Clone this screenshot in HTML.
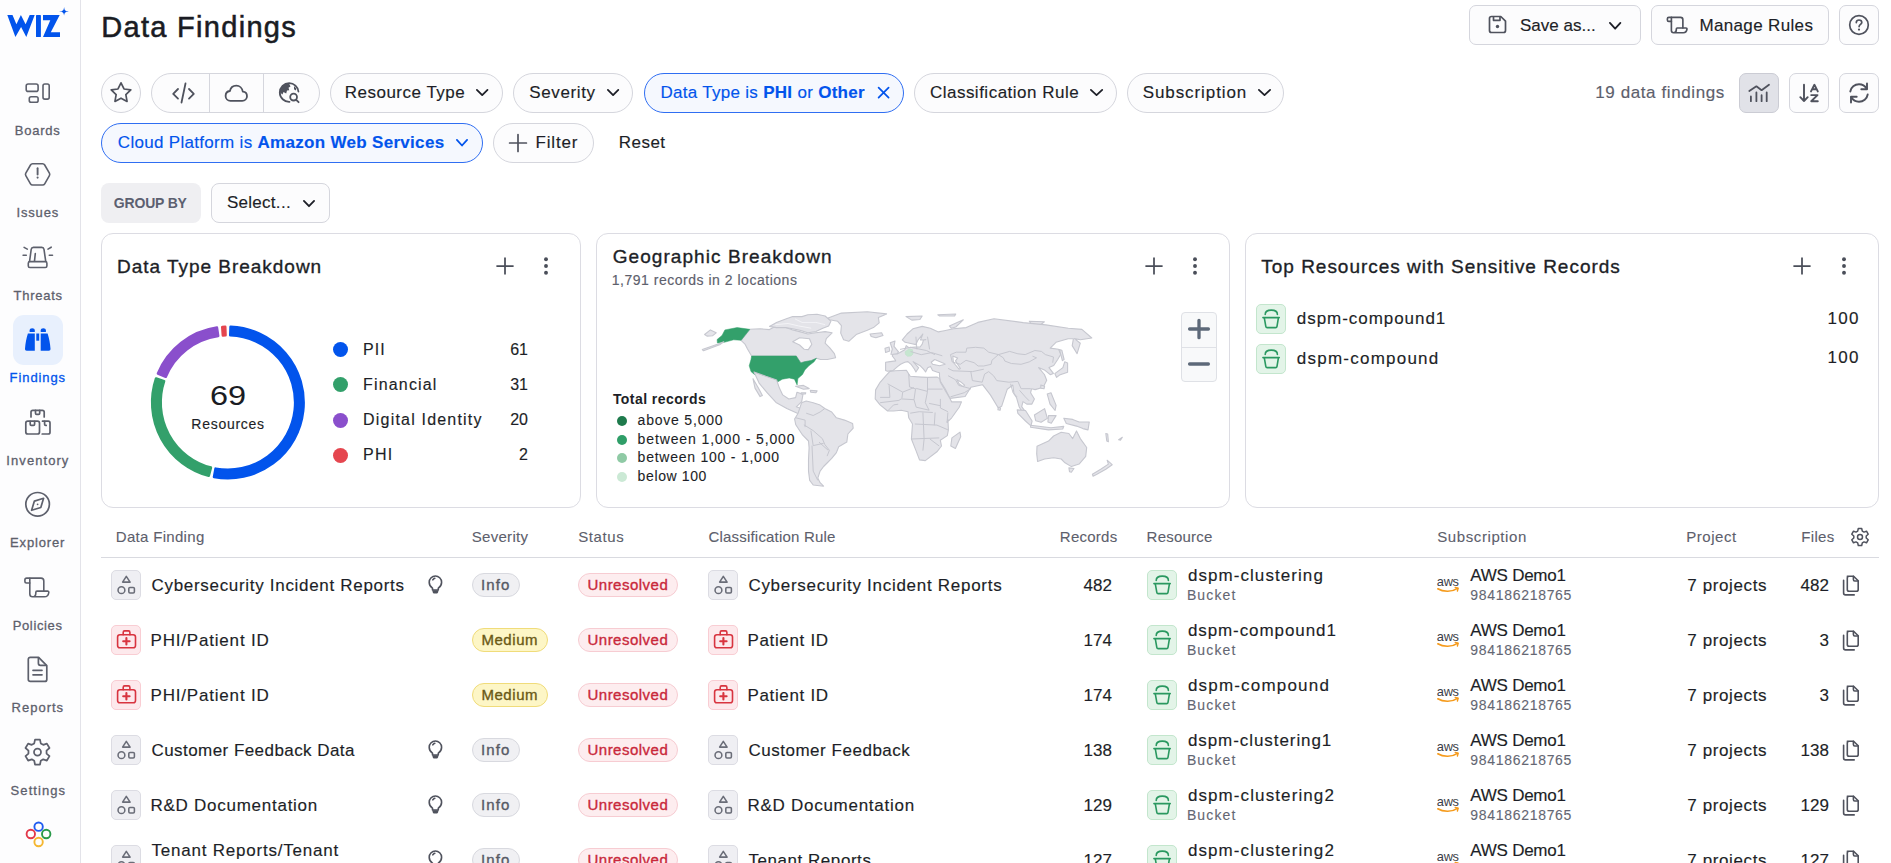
<!DOCTYPE html>
<html><head><meta charset="utf-8"><title>Data Findings</title>
<style>
*{box-sizing:border-box;margin:0;padding:0}
html,body{width:1891px;height:863px;overflow:hidden;background:#fff;font-family:"Liberation Sans",sans-serif;color:#1d1f27}
.a{position:absolute}
.t{position:absolute;white-space:nowrap;line-height:1}
#side{position:absolute;left:0;top:0;width:81px;height:863px;background:#fdfdfe;border-right:1px solid #e3e3e9}
.nl{position:absolute;left:0;width:76px;text-align:center;font-size:13px;color:#5d606c;letter-spacing:0.5px;line-height:1;-webkit-text-stroke:0.3px #5d606c}
.pill{position:absolute;height:40px;border:1px solid #d5d6dd;border-radius:20px;background:#fcfcfd}
.bpill{position:absolute;height:40px;border:1px solid #2f6ef2;border-radius:20px;background:#f5f8fe}
.btn{position:absolute;height:40px;border:1px solid #d5d6dd;border-radius:7px;background:#fcfcfd}
.card{position:absolute;top:233px;height:275px;border:1px solid #dcdce3;border-radius:12px;background:#fff}
.ic{position:absolute;width:30px;height:30px;border-radius:5px;border:1px solid #dcdce3;background:#efeff3}
.icr{background:#fde9ec;border-color:#f9cdd3}
.icg{background:#e3f4e8;border-color:#c3e6cd}
.tag{position:absolute;height:24px;border-radius:12px}
.ti{border:1px solid #d8d9df;background:#f0f0f3}
.tm{border:1px solid #f0dc7a;background:#fdf6c6}
.tu{border:1px solid #f7ccd2;background:#fdedef}

</style></head><body>
<div id="side">
<svg class="a" style="left:0;top:0" width="80" height="45" viewBox="0 0 80 45">
<g fill="#0254ec">
<path d="M7.3 15.1H12.5L16.4 24.3L20.9 15.1L25.6 24.3L29.7 15.1H34.7L26.3 37L21.1 26.9L15.4 37Z"/>
<rect x="36" y="15.1" width="4.9" height="21.9" rx="0.6"/>
<path d="M43 15.1H59.7L50.8 32.3H60V37H43L50.3 20.3H43Z"/>
<path d="M64.1 7C64.6 10.6 65.2 11.1 68.8 11.5C65.2 11.9 64.6 12.4 64.1 15.6C63.6 12.4 63 11.9 59.2 11.5C63 11.1 63.6 10.6 64.1 7Z"/>
</g></svg>
<!-- boards -->
<svg class="a" style="left:24px;top:80px" width="28" height="26" viewBox="0 0 28 26" fill="none" stroke="#5d606c" stroke-width="1.6">
<rect x="2.2" y="4" width="11.9" height="7.4" rx="2"/>
<rect x="5.3" y="16.7" width="8.8" height="5.5" rx="1.8"/>
<rect x="19" y="4" width="6.2" height="15.1" rx="1.8"/>
</svg>
<!-- issues -->
<svg class="a" style="left:24px;top:161px" width="28" height="27" viewBox="0 0 28 27" fill="none" stroke="#5d606c" stroke-width="1.6" stroke-linejoin="round">
<path d="M8.60 2.80L18.60 2.80Q20.00 2.80 20.70 4.01L25.40 12.19Q26.10 13.40 25.40 14.61L20.70 22.79Q20.00 24.00 18.60 24.00L8.60 24.00Q7.20 24.00 6.50 22.79L1.80 14.61Q1.10 13.40 1.80 12.19L6.50 4.01Q7.20 2.80 8.60 2.80Z"/>
<path d="M13.6 7.3V13.5" stroke-linecap="round" stroke-width="1.9"/>
<circle cx="13.6" cy="16.6" r="1.05" fill="#5d606c" stroke="none"/>
</svg>
<!-- threats -->
<svg class="a" style="left:22px;top:244px" width="32" height="26" viewBox="0 0 32 26" fill="none" stroke="#5d606c" stroke-width="1.6" stroke-linecap="round" stroke-linejoin="round">
<path d="M7.6 17.2L9.2 5.4C9.4 4.2 10.2 3.4 11.4 3.4H19.8C21 3.4 21.8 4.2 22 5.4L23.7 17.2"/>
<rect x="6.3" y="17.6" width="18.6" height="5.9" rx="1.6"/>
<path d="M13.3 9.5L12.5 17.2"/>
<path d="M1.1 11.2H4.3M27.3 11.2H30.5M2.1 3.4L5.3 5.1M29.2 3.2L26 5.1"/>
</svg>
<!-- findings active -->
<div class="a" style="left:13px;top:315px;width:50px;height:50px;border-radius:11px;background:#e8f0fd"></div>
<svg class="a" style="left:24px;top:326px" width="28" height="28" viewBox="0 0 28 28" fill="#0254ec">
<path d="M5.6 6V4.5C5.6 3.1 6.7 2.2 8.2 2.2C9.7 2.2 10.8 3.1 10.8 4.5V6Z"/>
<path d="M3.9 7.5H10.8V24.7H2.8C1.6 24.7 0.9 23.9 1 22.7C1.4 17.6 2.3 12.3 3.9 7.5Z"/>
<rect x="12.3" y="7.5" width="2.9" height="7.2"/>
<path d="M16.7 6V4.5C16.7 3.1 17.8 2.2 19.3 2.2C20.8 2.2 21.9 3.1 21.9 4.5V6Z"/>
<path d="M16.7 7.5H23.6C25.2 12.3 26.1 17.6 26.5 22.7C26.6 23.9 25.9 24.7 24.7 24.7H16.7Z"/>
</svg>
<!-- inventory -->
<svg class="a" style="left:24px;top:408px" width="28" height="28" viewBox="0 0 28 28" fill="none" stroke="#5d606c" stroke-width="1.7" stroke-linecap="round" stroke-linejoin="round">
<path d="M7 9V4.1C7 3 7.8 2.3 8.8 2.3H18.4C19.4 2.3 20.2 3 20.2 4.1V9"/>
<path d="M11.5 2.4V5.3C11.5 6 12 6.4 12.6 6.4H14.6C15.2 6.4 15.7 6 15.7 5.3V2.4"/>
<rect x="1.8" y="13.2" width="13.7" height="12.8" rx="2"/>
<path d="M6.2 13.3V16.3C6.2 17 6.7 17.4 7.3 17.4H9.5C10.1 17.4 10.6 17 10.6 16.3V13.3"/>
<path d="M18.5 13.2H24.2C25.3 13.2 26 13.9 26 15V24.2C26 25.3 25.3 26 24.2 26H18.2"/>
<path d="M20.6 13.3V16.3C20.6 17 21 17.4 21.7 17.4H22.2"/>
</svg>
<!-- explorer -->
<svg class="a" style="left:24px;top:491px" width="28" height="28" viewBox="0 0 28 28" fill="none" stroke="#5d606c" stroke-width="1.7" stroke-linejoin="round">
<circle cx="13.6" cy="13.3" r="11.8"/>
<path d="M19.6 7.3L16.8 16.5L7.6 19.3L10.4 10.1Z"/>
<circle cx="13.6" cy="13.3" r="0.9" fill="#5d606c" stroke="none"/>
</svg>
<!-- policies -->
<svg class="a" style="left:22px;top:574px" width="30" height="26" viewBox="0 0 30 26" fill="none" stroke="#5d606c" stroke-width="1.6" stroke-linecap="round" stroke-linejoin="round">
<path d="M7.8 9H4.6C3.6 9 2.9 8.3 2.9 7.3V5.9C2.9 4.9 3.7 4.1 4.7 4.1H19C20.6 4.1 21.8 5.4 21.8 7V17.1"/>
<path d="M7.8 4.2V20.1C7.8 21.7 9 22.8 10.5 22.8C12.1 22.8 13.8 21.7 13.8 19.2V18.4C13.8 17.6 14.3 17.1 15 17.1H25.6C26.4 17.1 26.9 17.7 26.8 18.5C26.5 21.1 24.9 22.8 22.3 22.8H10.5"/>
</svg>
<!-- reports -->
<svg class="a" style="left:26px;top:655px" width="24" height="28" viewBox="0 0 24 28" fill="none" stroke="#5d606c" stroke-width="1.7" stroke-linejoin="round">
<path d="M4.3 2.3H12.6L20.8 10.7V24.4C20.8 25.6 20 26.4 18.8 26.4H4.3C3.1 26.4 2.3 25.6 2.3 24.4V4.3C2.3 3.1 3.1 2.3 4.3 2.3Z"/>
<path d="M12.4 2.5V8.3C12.4 9.5 13.1 10.3 14.4 10.3H20.6"/>
<path d="M7 15.3H16M7 19.8H16" stroke-linecap="round"/>
</svg>
<!-- settings -->
<svg class="a" style="left:22px;top:736px" width="32" height="32" viewBox="0 0 32 32" fill="none" stroke="#5d606c" stroke-width="1.55" stroke-linejoin="round">
<g transform="translate(15.5 16.2) scale(1.13) translate(-13.8 -13.9)">
<path d="M11.6 1.8H16L16.7 5.1L18.9 6.4L22.1 5.3L24.4 9.2L21.8 11.5V14.1L24.4 16.4L22.1 20.3L18.9 19.2L16.7 20.5L16 23.8H11.6L10.9 20.5L8.7 19.2L5.5 20.3L3.2 16.4L5.8 14.1V11.5L3.2 9.2L5.5 5.3L8.7 6.4L10.9 5.1Z" transform="translate(0 1)"/>
<circle cx="13.8" cy="13.8" r="3.1"/>
</g></svg>
<!-- bottom logo -->
<svg class="a" style="left:24px;top:818px" width="30" height="32" viewBox="0 0 30 32" fill="none" stroke-width="1.9">
<circle cx="14.6" cy="8.7" r="4.2" stroke="#1f5bf0"/>
<circle cx="6.8" cy="16" r="4.2" stroke="#e2394a"/>
<circle cx="22.2" cy="16" r="4.2" stroke="#2a9a4a"/>
<circle cx="14.6" cy="24" r="4.2" stroke="#f5b731"/>
</svg>
</div>



<div class=t style='left:14.85px;top:123.79px;font-size:13px;color:#5d606c;letter-spacing:0.759px;-webkit-text-stroke:0.3px #5d606c'>Boards</div><div class=t style='left:16.45px;top:206.29px;font-size:13px;color:#5d606c;letter-spacing:0.844px;-webkit-text-stroke:0.3px #5d606c'>Issues</div><div class=t style='left:13.60px;top:288.79px;font-size:13px;color:#5d606c;letter-spacing:0.737px;-webkit-text-stroke:0.3px #5d606c'>Threats</div><div class=t style='left:9.60px;top:371.29px;font-size:13px;color:#0254ec;letter-spacing:0.908px;-webkit-text-stroke:0.3px #0254ec'>Findings</div><div class=t style='left:6.35px;top:453.79px;font-size:13px;color:#5d606c;letter-spacing:1.064px;-webkit-text-stroke:0.3px #5d606c'>Inventory</div><div class=t style='left:10.10px;top:536.29px;font-size:13px;color:#5d606c;letter-spacing:0.844px;-webkit-text-stroke:0.3px #5d606c'>Explorer</div><div class=t style='left:12.70px;top:618.79px;font-size:13px;color:#5d606c;letter-spacing:0.643px;-webkit-text-stroke:0.3px #5d606c'>Policies</div><div class=t style='left:11.60px;top:701.29px;font-size:13px;color:#5d606c;letter-spacing:0.995px;-webkit-text-stroke:0.3px #5d606c'>Reports</div><div class=t style='left:10.60px;top:783.79px;font-size:13px;color:#5d606c;letter-spacing:1.074px;-webkit-text-stroke:0.3px #5d606c'>Settings</div><div class=t style='left:101.30px;top:13.25px;font-size:29px;color:#1a1c23;letter-spacing:1.297px;-webkit-text-stroke:0.55px #1a1c23'>Data Findings</div><div class='btn' style='left:1469px;top:5px;width:172px;height:40px;'></div><svg class=a style='left:1487px;top:14px' width='21' height='21' viewBox='0 0 21 21' ><g fill='none' stroke='#4f525d' stroke-width='1.7' stroke-linejoin='round'><path d='M4.5 2.5H13.8L18.5 7.2V16.5C18.5 17.6 17.6 18.5 16.5 18.5H4.5C3.4 18.5 2.5 17.6 2.5 16.5V4.5C2.5 3.4 3.4 2.5 4.5 2.5Z'/><path d='M6.5 2.7V6.3H13V2.7'/></g><circle cx='10.5' cy='12.5' r='1.7' fill='#4f525d'/></svg><div class=t style='left:1520.00px;top:17.11px;font-size:17px;color:#1d1f27;letter-spacing:0.013px;-webkit-text-stroke:0.15px #1d1f27'>Save as...</div><svg class=a style='left:1607px;top:19.5px' width='16.3' height='11.6' viewBox='0 0 16.3 11.6' ><path d='M2.90 2.90L8.15 8.70L13.40 2.90' fill='none' stroke='#1d1f27' stroke-width='1.8' stroke-linecap='round' stroke-linejoin='round'/></svg><div class='btn' style='left:1651px;top:5px;width:178px;height:40px;'></div><svg class=a style='left:1665.3px;top:13.5px' width='25' height='22' viewBox='0 0 25 22' ><g transform='scale(0.82)' fill='none' stroke='#4f525d' stroke-width='2' stroke-linecap='round' stroke-linejoin='round'><path d='M7.8 9H4.6C3.6 9 2.9 8.3 2.9 7.3V5.9C2.9 4.9 3.7 4.1 4.7 4.1H19C20.6 4.1 21.8 5.4 21.8 7V17.1'/><path d='M7.8 4.2V20.1C7.8 21.7 9 22.8 10.5 22.8C12.1 22.8 13.8 21.7 13.8 19.2V18.4C13.8 17.6 14.3 17.1 15 17.1H25.6C26.4 17.1 26.9 17.7 26.8 18.5C26.5 21.1 24.9 22.8 22.3 22.8H10.5'/></g></svg><div class=t style='left:1699.40px;top:17.11px;font-size:17px;color:#1d1f27;letter-spacing:0.352px;-webkit-text-stroke:0.15px #1d1f27'>Manage Rules</div><div class='btn' style='left:1839px;top:5px;width:40px;height:40px;'></div><svg class=a style='left:1848px;top:14px' width='22' height='22' viewBox='0 0 22 22' ><circle cx='11' cy='11' r='9.3' fill='none' stroke='#4f525d' stroke-width='1.7'/><path d='M8.3 8.6C8.3 7 9.5 6 11 6C12.6 6 13.8 7 13.8 8.5C13.8 10.3 11.1 10.6 11.1 12.6' fill='none' stroke='#4f525d' stroke-width='1.7' stroke-linecap='round'/><circle cx='11' cy='15.6' r='1.1' fill='#4f525d'/></svg><div class='pill' style='left:101px;top:73px;width:40px;height:40px;'></div><svg class=a style='left:108.2px;top:79.8px' width='26' height='26' viewBox='0 0 26 26' ><path d='M13.00 2.80L16.00 8.97L22.80 9.92L17.85 14.68L19.05 21.43L13.00 18.20L6.95 21.43L8.15 14.68L3.20 9.92L10.00 8.97Z' fill='none' stroke='#4f525d' stroke-width='1.7' stroke-linejoin='round'/></svg><div class='pill' style='left:151px;top:73px;width:169px;height:40px;'></div><div class=a style='left:209px;top:73px;width:1px;height:40px;background:#d5d6dd'></div><div class=a style='left:263px;top:73px;width:1px;height:40px;background:#d5d6dd'></div><svg class=a style='left:170px;top:81px' width='27' height='24' viewBox='0 0 27 24' ><g fill='none' stroke='#4f525d' stroke-width='1.8' stroke-linecap='round' stroke-linejoin='round'><path d='M8 8L3.2 12.8L8 17.6'/><path d='M19 8L23.8 12.8L19 17.6'/><path d='M15.5 2.5L11.5 21.5'/></g></svg><svg class=a style='left:223px;top:82px' width='27' height='22' viewBox='0 0 27 22' ><path d='M7.5 18.8H19.2C22 18.8 24 16.8 24 14.2C24 11.7 22.2 9.9 19.8 9.7C19.3 6.3 16.6 3.6 13.3 3.6C10.1 3.6 7.5 5.9 6.9 9C4.3 9.3 2.6 11.5 2.6 14C2.6 16.7 4.7 18.8 7.5 18.8Z' fill='none' stroke='#4f525d' stroke-width='1.8' stroke-linejoin='round'/></svg><svg class=a style='left:277px;top:81px' width='25' height='24' viewBox='0 0 25 24' ><g fill='none' stroke='#4f525d' stroke-width='1.8' stroke-linecap='round'><path d='M12.5 20.8C7.3 21 2.8 16.9 2.8 11.6C2.8 6.4 7 2.2 12.2 2.2C17 2.2 21 5.8 21.4 10.5'/><circle cx='16.6' cy='16.1' r='3.4'/><path d='M19.2 18.8L21.6 21.2'/></g><path d='M4.2 6.8C6 4 8.8 2.4 12 2.3L13.5 5.5L11.5 6.8L12.3 9.2L10 9.5L9.2 12.5L6.5 11L5.5 13.5L3 11.5C3 9.8 3.4 8.2 4.2 6.8Z' fill='#4f525d'/><path d='M17 5L19.5 7.8L18.7 9.5L17 8.2Z' fill='#4f525d'/></svg><div class='pill' style='left:330px;top:73px;width:173px;height:40px;'></div><div class=t style='left:344.70px;top:84.41px;font-size:17px;color:#1d1f27;letter-spacing:0.502px;-webkit-text-stroke:0.15px #1d1f27'>Resource Type</div><svg class=a style='left:474px;top:86.5px' width='16.4' height='11.0' viewBox='0 0 16.4 11.0' ><path d='M2.90 2.90L8.20 8.10L13.50 2.90' fill='none' stroke='#1d1f27' stroke-width='1.8' stroke-linecap='round' stroke-linejoin='round'/></svg><div class='pill' style='left:513px;top:73px;width:120px;height:40px;'></div><div class=t style='left:529.30px;top:84.41px;font-size:17px;color:#1d1f27;letter-spacing:0.625px;-webkit-text-stroke:0.15px #1d1f27'>Severity</div><svg class=a style='left:605px;top:86.5px' width='16.2' height='11.0' viewBox='0 0 16.2 11.0' ><path d='M2.90 2.90L8.10 8.10L13.30 2.90' fill='none' stroke='#1d1f27' stroke-width='1.8' stroke-linecap='round' stroke-linejoin='round'/></svg><div class='bpill' style='left:644px;top:73px;width:260px;height:40px;'></div><div class=t style='left:660.40px;top:84.11px;font-size:17px;color:#0254ec;letter-spacing:0.296px;-webkit-text-stroke:0.15px #0254ec'>Data Type is <b>PHI</b> or <b>Other</b></div><svg class=a style='left:875px;top:84px' width='17' height='17' viewBox='0 0 17 17' ><path d='M3.6 3.6L13.6 13.6M13.6 3.6L3.6 13.6' stroke='#0254ec' stroke-width='1.7' stroke-linecap='round'/></svg><div class='pill' style='left:914px;top:73px;width:203px;height:40px;'></div><div class=t style='left:929.90px;top:84.41px;font-size:17px;color:#1d1f27;letter-spacing:0.495px;-webkit-text-stroke:0.15px #1d1f27'>Classification Rule</div><svg class=a style='left:1087.7px;top:86.5px' width='17.1' height='11.0' viewBox='0 0 17.1 11.0' ><path d='M2.90 2.90L8.55 8.10L14.20 2.90' fill='none' stroke='#1d1f27' stroke-width='1.8' stroke-linecap='round' stroke-linejoin='round'/></svg><div class='pill' style='left:1127px;top:73px;width:157px;height:40px;'></div><div class=t style='left:1142.70px;top:84.41px;font-size:17px;color:#1d1f27;letter-spacing:0.917px;-webkit-text-stroke:0.15px #1d1f27'>Subscription</div><svg class=a style='left:1255.5px;top:86.5px' width='17.0' height='11.0' viewBox='0 0 17.0 11.0' ><path d='M2.90 2.90L8.50 8.10L14.10 2.90' fill='none' stroke='#1d1f27' stroke-width='1.8' stroke-linecap='round' stroke-linejoin='round'/></svg><div class=t style='left:1595.20px;top:83.91px;font-size:17px;color:#5d606c;letter-spacing:0.604px;-webkit-text-stroke:0.15px #5d606c'>19 data findings</div><div class='btn' style='left:1739px;top:73px;width:40px;height:40px;background:#e1e2e8;border-color:#cbccd4'></div><svg class=a style='left:1746px;top:80px' width='26' height='26' viewBox='0 0 26 26' ><g fill='none' stroke='#4f525d' stroke-width='1.8' stroke-linecap='round' stroke-linejoin='round'><path d='M3.3 11L10.4 6.3L15.6 10.2L23 4.7'/><path d='M4.9 16.4V21.2M10.4 12.5V21.2M15.6 15.2V21.2M20.7 12.5V21.2'/></g></svg><div class='btn' style='left:1789px;top:73px;width:40px;height:40px;'></div><svg class=a style='left:1796px;top:80px' width='26' height='26' viewBox='0 0 26 26' ><g fill='none' stroke='#4f525d' stroke-width='1.9' stroke-linecap='round' stroke-linejoin='round'><path d='M8 4.8V21M4.3 17.2L8 21L11.7 17.2'/><path d='M15 11.4L18.4 4.8L21.8 11.4M16.1 9.3H20.7'/><path d='M15.2 15.1H21.5L15.2 21.2H21.8'/></g></svg><div class='btn' style='left:1839px;top:73px;width:40px;height:40px;'></div><svg class=a style='left:1846px;top:80px' width='26' height='26' viewBox='0 0 26 26' ><g fill='none' stroke='#4f525d' stroke-width='1.9' stroke-linecap='round' stroke-linejoin='round'><path d='M4.3 11.5C5 7.3 8.6 4.3 13 4.3C16.3 4.3 19.1 6 20.6 8.7'/><path d='M21 3.5V9.3H15.3'/><path d='M21.7 14.5C21 18.7 17.4 21.7 13 21.7C9.7 21.7 6.9 20 5.4 17.3'/><path d='M5 22.5V16.7H10.7'/></g></svg><div class='bpill' style='left:101px;top:123px;width:382px;height:40px;'></div><div class=t style='left:117.80px;top:133.81px;font-size:17px;color:#0254ec;letter-spacing:0.307px;-webkit-text-stroke:0.15px #0254ec'>Cloud Platform is <b>Amazon Web Services</b></div><svg class=a style='left:454.3px;top:137.2px' width='16.0' height='11.4' viewBox='0 0 16.0 11.4' ><path d='M2.90 2.90L8.00 8.50L13.10 2.90' fill='none' stroke='#0254ec' stroke-width='1.8' stroke-linecap='round' stroke-linejoin='round'/></svg><div class='pill' style='left:493px;top:123px;width:101px;height:40px;'></div><svg class=a style='left:506.5px;top:131.5px' width='22' height='22' viewBox='0 0 22 22' ><path d='M11 2.6V19.4M2.6 11H19.4' stroke='#4f525d' stroke-width='1.7' stroke-linecap='round'/></svg><div class=t style='left:535.50px;top:134.31px;font-size:17px;color:#1d1f27;letter-spacing:0.836px;-webkit-text-stroke:0.15px #1d1f27'>Filter</div><div class=t style='left:618.70px;top:134.31px;font-size:17px;color:#1d1f27;letter-spacing:0.500px;-webkit-text-stroke:0.15px #1d1f27'>Reset</div><div class=a style='left:101px;top:183px;width:100px;height:40px;border-radius:8px;background:#efeff2'></div><div class=t style='left:113.80px;top:196.15px;font-size:14px;color:#5c6070;letter-spacing:-0.186px;font-weight:700'>GROUP BY</div><div class='btn' style='left:211px;top:183px;width:119px;height:40px;border-radius:8px'></div><div class=t style='left:226.90px;top:193.61px;font-size:17px;color:#1d1f27;letter-spacing:0.288px;-webkit-text-stroke:0.15px #1d1f27'>Select...</div><svg class=a style='left:301px;top:197.6px' width='16' height='11.1' viewBox='0 0 16 11.1' ><path d='M2.90 2.90L8.00 8.20L13.10 2.90' fill='none' stroke='#1d1f27' stroke-width='1.8' stroke-linecap='round' stroke-linejoin='round'/></svg><div class=card style='left:101px;width:480px'></div><div class=card style='left:596px;width:634px'></div><div class=card style='left:1245px;width:634px'></div><div class=t style='left:117.10px;top:256.81px;font-size:19px;color:#1d1f27;letter-spacing:0.970px;-webkit-text-stroke:0.35px #1d1f27'>Data Type Breakdown</div><svg class=a style='left:494.9px;top:256.2px' width='20' height='20' viewBox='0 0 20 20'><path d='M10 1.4V18.6M1.4 10H18.6' stroke='#4a4e59' stroke-width='1.75' stroke-linecap='butt'/></svg><svg class=a style='left:542.8px;top:256.2px' width='6' height='20' viewBox='0 0 6 20'><circle cx='3' cy='3.2' r='1.95' fill='#4a4e59'/><circle cx='3' cy='10' r='1.95' fill='#4a4e59'/><circle cx='3' cy='16.8' r='1.95' fill='#4a4e59'/></svg><svg class=a style='left:0;top:0' width='1891' height='863' viewBox='0 0 1891 863' pointer-events='none'><path d='M230.60 326.85A75.70 75.70 0 1 1 214.03 476.92L215.57 468.66A67.30 67.30 0 1 0 230.30 335.24Z' fill='#0254ec' stroke='#0254ec' stroke-width='2.60' stroke-linejoin='round'/><path d='M208.76 475.74A75.70 75.70 0 0 1 156.09 378.53L164.06 381.19A67.30 67.30 0 0 0 210.89 467.61Z' fill='#33a06b' stroke='#33a06b' stroke-width='2.60' stroke-linejoin='round'/><path d='M157.98 373.48A75.70 75.70 0 0 1 216.92 327.60L218.14 335.91A67.30 67.30 0 0 0 165.74 376.70Z' fill='#8a4fcc' stroke='#8a4fcc' stroke-width='2.60' stroke-linejoin='round'/><path d='M222.28 327.01A75.70 75.70 0 0 1 225.20 326.85L225.50 335.24A67.30 67.30 0 0 0 222.90 335.39Z' fill='#e5464f' stroke='#e5464f' stroke-width='2.60' stroke-linejoin='round'/></svg><div class=t style='left:209.82px;top:382.32px;font-size:27.5px;color:#1a1c23;letter-spacing:0.000px;transform:scaleX(1.1802);transform-origin:0 0'>69</div><div class=t style='left:191.30px;top:416.85px;font-size:14px;color:#1d1f27;letter-spacing:0.735px;-webkit-text-stroke:0.15px #1d1f27'>Resources</div><div class=a style='left:332.8px;top:341.7px;width:15.4px;height:15.4px;border-radius:50%;background:#0254ec'></div><div class=t style='left:363.10px;top:342.25px;font-size:16px;color:#1d1f27;letter-spacing:0.991px;-webkit-text-stroke:0.15px #1d1f27'>PII</div><div class=t style='left:510.20px;top:342.25px;font-size:16px;color:#1d1f27;letter-spacing:0.000px;-webkit-text-stroke:0.15px #1d1f27'>61</div><div class=a style='left:332.8px;top:376.7px;width:15.4px;height:15.4px;border-radius:50%;background:#33a06b'></div><div class=t style='left:363.10px;top:376.95px;font-size:16px;color:#1d1f27;letter-spacing:1.153px;-webkit-text-stroke:0.15px #1d1f27'>Financial</div><div class=t style='left:510.20px;top:376.95px;font-size:16px;color:#1d1f27;letter-spacing:0.000px;-webkit-text-stroke:0.15px #1d1f27'>31</div><div class=a style='left:332.8px;top:412.6px;width:15.4px;height:15.4px;border-radius:50%;background:#8a4fcc'></div><div class=t style='left:363.10px;top:412.25px;font-size:16px;color:#1d1f27;letter-spacing:1.193px;-webkit-text-stroke:0.15px #1d1f27'>Digital Identity</div><div class=t style='left:510.20px;top:412.25px;font-size:16px;color:#1d1f27;letter-spacing:0.000px;-webkit-text-stroke:0.15px #1d1f27'>20</div><div class=a style='left:332.8px;top:447.8px;width:15.4px;height:15.4px;border-radius:50%;background:#e5464f'></div><div class=t style='left:363.10px;top:447.45px;font-size:16px;color:#1d1f27;letter-spacing:1.187px;-webkit-text-stroke:0.15px #1d1f27'>PHI</div><div class=t style='left:519.09px;top:447.45px;font-size:16px;color:#1d1f27;letter-spacing:0.000px;-webkit-text-stroke:0.15px #1d1f27'>2</div><div class=t style='left:612.70px;top:247.41px;font-size:19px;color:#1d1f27;letter-spacing:1.068px;-webkit-text-stroke:0.35px #1d1f27'>Geographic Breakdown</div><div class=t style='left:611.70px;top:272.85px;font-size:14px;color:#5d606c;letter-spacing:0.518px;-webkit-text-stroke:0.15px #5d606c'>1,791 records in 2 locations</div><svg class=a style='left:1143.9px;top:256.2px' width='20' height='20' viewBox='0 0 20 20'><path d='M10 1.4V18.6M1.4 10H18.6' stroke='#4a4e59' stroke-width='1.75' stroke-linecap='butt'/></svg><svg class=a style='left:1191.8px;top:256.2px' width='6' height='20' viewBox='0 0 6 20'><circle cx='3' cy='3.2' r='1.95' fill='#4a4e59'/><circle cx='3' cy='10' r='1.95' fill='#4a4e59'/><circle cx='3' cy='16.8' r='1.95' fill='#4a4e59'/></svg><div class=a style='left:1181px;top:311.5px;width:36px;height:70.5px;border:1px solid #dfe1e6;border-radius:4px;background:#f8f9fa'></div><div class=a style='left:1182px;top:346.5px;width:34px;height:1px;background:#dfe1e6'></div><svg class=a style='left:1187px;top:317.2px' width='24' height='24' viewBox='0 0 24 24'><path d='M12 3.3V20.7M2.6 12H21.4' stroke='#5d6979' stroke-width='3.3' stroke-linecap='round'/></svg><svg class=a style='left:1187px;top:351.9px' width='24' height='24' viewBox='0 0 24 24'><path d='M2.6 12H21.4' stroke='#5d6979' stroke-width='3.3' stroke-linecap='round'/></svg><svg class=a style='left:0;top:0' width='1891' height='863' viewBox='0 0 1891 863' pointer-events='none'><path d='M741.1 340.3L749.8 329.3L760.2 328.8L769.5 329.6L774.2 327.0L781.1 325.9L788.1 328.2L792.7 329.9L799.6 331.6L807.8 334.0L815.9 332.8L825.1 331.6L832.1 332.8L826.3 338.6L825.1 343.2L829.8 347.9L834.4 353.7L835.6 357.7L827.4 359.5L820.5 359.5L816.4 358.3L811.2 360.6L804.3 361.8L800.8 362.9L798.5 359.5L796.2 356.0L751.6 356.0L747.5 349.0L745.2 344.4Z' fill='#e4e4e9' stroke='#c6c7cf' stroke-width='1.1' stroke-linejoin='round'/><path d='M792.7 341.8L799.6 337.7L809.5 338.8L811.8 344.4L808.3 349.6L804.3 349.3L799.6 345.0Z' fill='#ffffff' stroke='#c6c7cf' stroke-width='1.1' stroke-linejoin='round'/><path d='M769.5 326.4L776.5 322.4L785.7 318.9L792.7 316.6L802.0 316.6L807.8 314.8L817.0 314.3L825.1 316.0L830.9 321.2L828.6 325.9L822.8 328.2L815.9 331.6L807.8 332.8L800.8 330.5L792.7 328.8L785.7 327.6L776.5 327.6Z' fill='#e4e4e9' stroke='#c6c7cf' stroke-width='1.1' stroke-linejoin='round'/><path d='M775.3 324.7L788.1 323.5L798.5 325.9L811.2 328.2' fill='none' stroke='#f4f4f7' stroke-width='1.0' stroke-linejoin='round'/><path d='M795.0 318.9L802.0 322.4L815.9 322.4L825.1 324.7' fill='none' stroke='#f4f4f7' stroke-width='0.9' stroke-linejoin='round'/><path d='M828.1 318.0L841.4 313.1L867.3 311.7L886.6 313.9L878.4 317.6L879.2 322.8L874.0 327.2L867.3 330.2L856.2 334.6L848.8 341.3L843.6 339.8L840.7 333.1L841.4 325.7L837.7 321.3L829.6 319.8Z' fill='#e4e4e9' stroke='#c6c7cf' stroke-width='1.1' stroke-linejoin='round'/><path d='M724.9 329.9L737.1 327.6L749.8 329.3L741.1 340.3L733.6 339.8L724.3 342.3L717.4 343.0L717.1 339.5L722.0 335.4Z' fill='#33a06b' stroke='#33a06b' stroke-width='0.5' stroke-linejoin='round'/><path d='M704.6 334.5L710.4 329.9L716.2 332.8L712.7 335.7L707.0 336.1Z' fill='#e4e4e9' stroke='#c6c7cf' stroke-width='1.1' stroke-linejoin='round'/><path d='M702.3 349.6L717.4 344.2L723.8 341.8L720.3 344.4L703.5 350.8Z' fill='#e4e4e9' stroke='#c6c7cf' stroke-width='1.1' stroke-linejoin='round'/><path d='M751.6 356.0L796.2 356.0L798.5 359.5L800.8 362.9L804.3 361.8L811.2 360.6L816.4 358.3L814.1 361.8L808.9 365.8L804.9 369.9L802.5 374.5L797.9 378.6L797.1 384.9L794.4 379.2L789.2 378.0L782.3 379.2L775.9 382.9L769.5 378.2L762.6 375.9L754.5 374.5L751.0 371.6L749.2 365.8L751.0 359.5Z' fill='#33a06b' stroke='#33a06b' stroke-width='0.5' stroke-linejoin='round'/><path d='M754.0 371.9L765.8 376.3L776.6 380.0L779.4 388.1L782.7 394.9L788.8 399.0L795.6 397.6L797.0 392.2L803.0 394.2L801.7 401.7L796.3 406.8L804.7 410.1L813.2 415.9L821.7 422.0L819.3 424.0L810.5 420.3L799.0 413.9L786.8 408.4L776.0 402.4L767.5 393.2L759.1 383.1Z' fill='#e4e4e9' stroke='#c6c7cf' stroke-width='1.1' stroke-linejoin='round'/><path d='M753.0 378.7L758.4 388.1L762.4 395.6L760.1 396.6L755.0 388.1Z' fill='#e4e4e9' stroke='#c6c7cf' stroke-width='1.1' stroke-linejoin='round'/><path d='M795.6 386.3L803.5 385.4L809.2 388.6L803.5 389.3Z' fill='#e4e4e9' stroke='#c6c7cf' stroke-width='1.1' stroke-linejoin='round'/><path d='M810.3 390.4L817.1 390.9L815.9 392.7L810.7 392.2Z' fill='#e4e4e9' stroke='#c6c7cf' stroke-width='1.1' stroke-linejoin='round'/><path d='M801.2 392.7L805.8 392.7L805.3 394.0L801.2 394.0Z' fill='#e4e4e9' stroke='#c6c7cf' stroke-width='1.1' stroke-linejoin='round'/><path d='M801.6 402.7L806.2 401.0L813.2 402.7L820.1 405.1L824.8 408.5L831.7 412.0L836.4 417.8L844.5 420.1L852.6 423.6L853.2 428.2L847.9 434.0L846.8 442.1L838.7 446.8L836.4 452.6L831.7 458.4L827.1 463.0L823.6 466.5L820.1 471.1L817.8 478.1L820.1 482.7L823.6 486.2L813.2 485.0L809.7 480.4L808.5 471.1L808.5 459.5L809.1 447.9L808.5 441.0L802.7 435.2L795.8 424.8L794.6 419.0L798.1 413.2Z' fill='#e4e4e9' stroke='#c6c7cf' stroke-width='1.1' stroke-linejoin='round'/><path d='M803.9 424.8L813.2 430.6L822.4 438.7L824.8 444.5L829.4 450.3L827.1 456.1' fill='none' stroke='#c6c7cf' stroke-width='1.0' stroke-linejoin='round'/><path d='M806.2 413.2L813.2 415.5L820.1 412.0L824.8 408.5' fill='none' stroke='#c6c7cf' stroke-width='1.0' stroke-linejoin='round'/><path d='M795.8 417.8L805.1 420.1L805.1 427.1' fill='none' stroke='#c6c7cf' stroke-width='1.0' stroke-linejoin='round'/><path d='M810.9 430.6L813.2 445.6L823.6 443.3' fill='none' stroke='#c6c7cf' stroke-width='1.0' stroke-linejoin='round'/><path d='M812.0 445.6L813.2 471.1L817.8 480.4' fill='none' stroke='#c6c7cf' stroke-width='1.0' stroke-linejoin='round'/><path d='M819.0 442.1L828.2 450.3' fill='none' stroke='#c6c7cf' stroke-width='1.0' stroke-linejoin='round'/><path d='M870.1 334.0L881.6 332.8L883.0 335.4L875.9 337.7L871.2 336.5Z' fill='#e4e4e9' stroke='#c6c7cf' stroke-width='1.1' stroke-linejoin='round'/><path d='M890.2 342.8L895.0 341.0L894.0 346.3L898.5 351.8L896.8 354.6L890.9 354.3L892.3 349.0Z' fill='#e4e4e9' stroke='#c6c7cf' stroke-width='1.1' stroke-linejoin='round'/><path d='M885.0 348.3L889.1 347.0L889.8 351.1L885.6 352.5Z' fill='#e4e4e9' stroke='#c6c7cf' stroke-width='1.1' stroke-linejoin='round'/><path d='M906.0 316.6L922.2 316.0L919.9 319.5L911.8 320.1Z' fill='#e4e4e9' stroke='#c6c7cf' stroke-width='1.1' stroke-linejoin='round'/><path d='M937.8 314.8L955.8 314.0L954.6 316.0L939.6 316.0Z' fill='#e4e4e9' stroke='#c6c7cf' stroke-width='1.1' stroke-linejoin='round'/><path d='M949.4 325.9L963.3 319.8L955.8 327.0L951.2 328.2Z' fill='#e4e4e9' stroke='#c6c7cf' stroke-width='1.1' stroke-linejoin='round'/><path d='M1029.3 321.2L1044.4 321.8L1039.8 325.3L1031.6 324.7Z' fill='#e4e4e9' stroke='#c6c7cf' stroke-width='1.1' stroke-linejoin='round'/><path d='M885.6 362.3L890.2 361.6L895.7 360.9L895.0 359.5L892.3 356.0L892.9 354.3L897.1 353.9L899.9 352.5L904.8 349.7L906.2 345.6L908.9 347.6L915.2 347.0L920.1 347.0L922.2 344.2L923.5 340.0L925.9 339.8L920.5 340.0L922.8 334.0L918.1 339.8L915.8 344.6L912.0 343.8L905.1 342.3L902.3 339.8L907.1 334.0L912.9 328.8L922.2 326.4L930.3 328.2L938.4 331.9L944.2 330.7L953.5 328.8L966.2 327.6L977.8 322.4L994.0 318.7L1023.2 322.6L1045.8 324.9L1068.3 328.2L1081.9 329.4L1091.8 338.0L1080.3 339.8L1074.5 338.6L1080.3 343.2L1077.1 353.7L1072.2 345.6L1073.4 338.8L1068.1 338.8L1056.0 342.3L1050.2 348.1L1058.5 349.3L1060.8 354.2L1057.7 359.5L1053.7 365.5L1049.0 367.6L1053.4 373.4L1050.2 374.7L1044.4 369.9L1038.6 367.6L1044.4 374.5L1046.7 380.3L1043.2 387.3L1035.1 389.6L1031.6 388.7L1030.6 392.7L1034.4 399.0L1031.9 404.1L1026.8 404.1L1023.0 401.6L1021.7 406.7L1025.5 411.8L1023.0 413.3L1019.1 406.7L1016.6 397.8L1014.0 393.9L1012.8 385.0L1007.3 389.2L1001.7 406.2L998.3 408.0L990.4 394.9L982.5 384.7L970.9 387.3L965.1 396.5L950.0 398.4L945.1 388.7L940.2 381.0L939.5 376.2L939.5 372.7L936.8 372.0L932.6 370.6L930.5 366.4L927.7 367.8L925.6 372.0L923.5 369.2L920.1 365.7L913.1 361.6L918.7 367.8L915.9 372.0L914.5 369.2L911.0 364.3L907.9 361.6L904.8 362.3L900.6 364.3L897.8 366.4L892.9 370.6L887.4 371.3L885.6 370.6Z' fill='#e4e4e9' stroke='#c6c7cf' stroke-width='1.1' stroke-linejoin='round'/><path d='M931.2 362.3L934.7 359.5L943.0 362.9L945.1 364.3L939.5 365.7L932.6 364.3Z' fill='#ffffff' stroke='#c6c7cf' stroke-width='1.1' stroke-linejoin='round'/><path d='M952.8 356.0L957.6 358.1L955.5 360.9L960.4 368.5L959.0 369.2L955.5 365.0L953.4 362.3Z' fill='#ffffff' stroke='#c6c7cf' stroke-width='1.1' stroke-linejoin='round'/><path d='M956.9 379.6L960.4 381.7L964.6 385.2L963.2 386.6L959.0 383.8Z' fill='#ffffff' stroke='#c6c7cf' stroke-width='1.1' stroke-linejoin='round'/><path d='M905.1 351.8L908.9 349.0L912.4 349.7L913.1 353.9L911.0 356.0L907.6 356.3L905.5 354.6Z' fill='#c6e6d0' stroke='#bfe0c9' stroke-width='0.6' stroke-linejoin='round'/><path d='M1054.8 373.6L1062.9 367.6L1064.7 361.8L1067.6 362.9L1067.6 372.2L1059.5 375.1L1056.6 377.4Z' fill='#e4e4e9' stroke='#c6c7cf' stroke-width='1.1' stroke-linejoin='round'/><path d='M1059.5 349.6L1061.8 350.2L1064.1 359.5L1062.4 360.6Z' fill='#e4e4e9' stroke='#c6c7cf' stroke-width='1.1' stroke-linejoin='round'/><path d='M998.3 407.3L1000.6 408.0L1000.1 410.3L997.9 409.8Z' fill='#e4e4e9' stroke='#c6c7cf' stroke-width='1.1' stroke-linejoin='round'/><path d='M1017.2 409.9L1025.5 410.5L1032.1 421.0L1030.9 425.8L1025.5 421.0L1017.9 413.3Z' fill='#e4e4e9' stroke='#c6c7cf' stroke-width='1.1' stroke-linejoin='round'/><path d='M1030.6 425.2L1051.0 427.7L1063.8 426.4L1062.7 429.0L1048.5 429.9L1030.6 427.3Z' fill='#e4e4e9' stroke='#c6c7cf' stroke-width='1.1' stroke-linejoin='round'/><path d='M1034.4 415.0L1044.6 408.6L1047.4 418.4L1041.1 422.2L1035.7 420.7Z' fill='#e4e4e9' stroke='#c6c7cf' stroke-width='1.1' stroke-linejoin='round'/><path d='M1048.5 415.6L1056.1 415.6L1051.3 423.3L1047.9 422.0Z' fill='#e4e4e9' stroke='#c6c7cf' stroke-width='1.1' stroke-linejoin='round'/><path d='M1047.2 393.9L1051.0 392.7L1056.1 405.4L1055.1 410.5L1050.0 404.1Z' fill='#e4e4e9' stroke='#c6c7cf' stroke-width='1.1' stroke-linejoin='round'/><path d='M1063.8 418.2L1072.7 419.4L1079.1 422.0L1089.3 422.0L1088.0 429.9L1082.9 428.6L1076.5 426.1L1066.3 423.5Z' fill='#e4e4e9' stroke='#c6c7cf' stroke-width='1.1' stroke-linejoin='round'/><path d='M1040.8 385.0L1044.6 386.3L1044.0 388.8L1040.8 388.2Z' fill='#e4e4e9' stroke='#c6c7cf' stroke-width='1.1' stroke-linejoin='round'/><path d='M1037.0 446.2L1048.5 441.1L1053.6 436.0L1061.2 432.2L1068.9 433.5L1072.7 438.6L1076.5 430.9L1080.3 438.6L1086.7 447.5L1085.7 456.4L1079.1 464.1L1071.4 466.6L1065.0 462.8L1061.2 459.0L1053.6 457.7L1044.6 459.0L1037.6 461.5L1036.7 453.9Z' fill='#e4e4e9' stroke='#c6c7cf' stroke-width='1.1' stroke-linejoin='round'/><path d='M1068.9 467.9L1074.0 468.5L1071.4 472.3L1069.5 471.7Z' fill='#e4e4e9' stroke='#c6c7cf' stroke-width='1.1' stroke-linejoin='round'/><path d='M1107.1 460.2L1112.2 464.7L1105.8 469.2L1096.9 474.3L1093.1 476.2L1092.4 474.3L1100.7 469.2L1108.4 464.1Z' fill='#e4e4e9' stroke='#c6c7cf' stroke-width='1.1' stroke-linejoin='round'/><path d='M1105.8 433.5L1107.7 434.1L1108.4 441.7L1106.8 441.1Z' fill='#e4e4e9' stroke='#c6c7cf' stroke-width='1.1' stroke-linejoin='round'/><path d='M1118.6 439.8L1122.4 437.3L1120.5 440.1Z' fill='#e4e4e9' stroke='#c6c7cf' stroke-width='1.1' stroke-linejoin='round'/><path d='M950.5 354.6L956.2 352.2L966.0 352.2L966.8 348.1L975.7 347.3L983.8 348.1L988.7 352.2L998.4 354.6' fill='none' stroke='#c6c7cf' stroke-width='1.0' stroke-linejoin='round'/><path d='M998.4 354.6L1009.7 351.4L1017.9 353.8L1025.2 354.6L1034.9 350.5L1041.4 351.4L1045.4 354.6L1053.5 357.0L1052.7 362.7' fill='none' stroke='#c6c7cf' stroke-width='1.0' stroke-linejoin='round'/><path d='M998.4 354.6L1003.3 357.8L1004.9 361.1L1011.4 363.5L1021.1 364.3L1029.2 361.9L1036.5 357.8L1032.5 356.2' fill='none' stroke='#c6c7cf' stroke-width='1.0' stroke-linejoin='round'/><path d='M998.4 354.6L991.9 360.3L991.1 364.3L983.8 366.0' fill='none' stroke='#c6c7cf' stroke-width='1.0' stroke-linejoin='round'/><path d='M950.5 354.6L952.2 361.9L960.3 364.3L966.0 360.3L974.1 362.7L978.1 366.0L983.8 366.0' fill='none' stroke='#c6c7cf' stroke-width='1.0' stroke-linejoin='round'/><path d='M948.1 368.4L953.0 370.8L972.4 371.6L983.8 369.2' fill='none' stroke='#c6c7cf' stroke-width='1.0' stroke-linejoin='round'/><path d='M970.8 371.6L972.4 380.6L982.2 382.2L984.6 374.1L988.7 371.6' fill='none' stroke='#c6c7cf' stroke-width='1.0' stroke-linejoin='round'/><path d='M988.7 371.6L993.5 375.7L996.8 380.6L1008.9 382.2L1017.9 381.4L1021.1 388.7L1030.8 388.7' fill='none' stroke='#c6c7cf' stroke-width='1.0' stroke-linejoin='round'/><path d='M1010.6 383.8L1013.0 392.7L1017.0 396.8' fill='none' stroke='#c6c7cf' stroke-width='1.0' stroke-linejoin='round'/><path d='M1019.5 390.3L1025.2 396.8L1029.2 400.8' fill='none' stroke='#c6c7cf' stroke-width='1.0' stroke-linejoin='round'/><path d='M948.1 375.7L955.4 379.7L958.7 385.4L970.8 388.7' fill='none' stroke='#c6c7cf' stroke-width='1.0' stroke-linejoin='round'/><path d='M950.5 396.8L964.3 392.7L970.8 388.7' fill='none' stroke='#c6c7cf' stroke-width='1.0' stroke-linejoin='round'/><path d='M900.0 349.4L910.6 347.3L926.4 350.5L934.9 354.7' fill='none' stroke='#c6c7cf' stroke-width='1.0' stroke-linejoin='round'/><path d='M910.6 351.5L921.2 354.7L931.7 352.6L942.3 355.8' fill='none' stroke='#c6c7cf' stroke-width='1.0' stroke-linejoin='round'/><path d='M915.9 336.7L916.9 349.4' fill='none' stroke='#c6c7cf' stroke-width='1.0' stroke-linejoin='round'/><path d='M927.5 336.7L929.6 349.4' fill='none' stroke='#c6c7cf' stroke-width='1.0' stroke-linejoin='round'/><path d='M889.9 371.4L895.1 370.7L906.4 370.3L910.2 376.3L921.5 377.1L927.5 377.4L937.3 377.1L939.6 378.6L940.4 382.3L950.2 398.9L951.7 401.9L961.5 401.9L959.2 407.2L951.7 417.8L947.1 422.3L947.9 419.3L948.4 429.8L947.3 435.6L940.3 440.2L941.5 446.0L936.9 451.8L925.3 460.6L919.5 459.9L916.0 450.6L911.4 439.0L912.5 424.0L908.7 417.8L908.0 411.7L901.2 410.2L893.6 411.0L887.6 411.0L880.1 404.9L875.2 398.9L875.6 389.9L880.1 382.3L885.3 376.3Z' fill='#e4e4e9' stroke='#c6c7cf' stroke-width='1.1' stroke-linejoin='round'/><path d='M950.8 446.0L951.9 437.9L960.0 432.1L960.7 436.7L955.4 448.5Z' fill='#e4e4e9' stroke='#c6c7cf' stroke-width='1.1' stroke-linejoin='round'/><path d='M887.6 383.8L902.7 392.1L901.9 398.2' fill='none' stroke='#c6c7cf' stroke-width='1.0' stroke-linejoin='round'/><path d='M889.1 385.3L889.9 397.4L880.1 397.4' fill='none' stroke='#c6c7cf' stroke-width='1.0' stroke-linejoin='round'/><path d='M908.7 374.0L909.5 386.9L916.2 389.1' fill='none' stroke='#c6c7cf' stroke-width='1.0' stroke-linejoin='round'/><path d='M916.2 388.4L927.5 391.4L927.5 377.1' fill='none' stroke='#c6c7cf' stroke-width='1.0' stroke-linejoin='round'/><path d='M927.5 389.1L942.6 389.1' fill='none' stroke='#c6c7cf' stroke-width='1.0' stroke-linejoin='round'/><path d='M927.5 391.4L925.3 402.7L929.1 410.2' fill='none' stroke='#c6c7cf' stroke-width='1.0' stroke-linejoin='round'/><path d='M901.2 398.9L914.0 399.7' fill='none' stroke='#c6c7cf' stroke-width='1.0' stroke-linejoin='round'/><path d='M902.7 392.1L914.0 387.6' fill='none' stroke='#c6c7cf' stroke-width='1.0' stroke-linejoin='round'/><path d='M915.5 389.1L914.0 399.7L916.2 407.2' fill='none' stroke='#c6c7cf' stroke-width='1.0' stroke-linejoin='round'/><path d='M929.1 403.4L940.4 405.7' fill='none' stroke='#c6c7cf' stroke-width='1.0' stroke-linejoin='round'/><path d='M940.4 398.9L940.4 408.0L947.9 411.7' fill='none' stroke='#c6c7cf' stroke-width='1.0' stroke-linejoin='round'/><path d='M916.2 407.2L929.1 410.2' fill='none' stroke='#c6c7cf' stroke-width='1.0' stroke-linejoin='round'/><path d='M880.1 402.7L898.9 400.4L901.2 398.9' fill='none' stroke='#c6c7cf' stroke-width='1.0' stroke-linejoin='round'/><path d='M887.6 411.0L893.6 404.9L898.2 404.2' fill='none' stroke='#c6c7cf' stroke-width='1.0' stroke-linejoin='round'/><path d='M910.2 413.2L919.3 411.7L932.8 412.5' fill='none' stroke='#c6c7cf' stroke-width='1.0' stroke-linejoin='round'/><path d='M935.1 412.5L934.3 425.3' fill='none' stroke='#c6c7cf' stroke-width='1.0' stroke-linejoin='round'/><path d='M947.9 412.5L947.1 422.3' fill='none' stroke='#c6c7cf' stroke-width='1.0' stroke-linejoin='round'/><path d='M914.8 424.0L936.9 425.1L947.9 429.8' fill='none' stroke='#c6c7cf' stroke-width='1.0' stroke-linejoin='round'/><path d='M911.4 439.0L939.2 437.9' fill='none' stroke='#c6c7cf' stroke-width='1.0' stroke-linejoin='round'/><path d='M922.9 412.4L924.1 439.0L922.9 450.6' fill='none' stroke='#c6c7cf' stroke-width='1.0' stroke-linejoin='round'/><path d='M929.9 439.0L939.2 446.0' fill='none' stroke='#c6c7cf' stroke-width='1.0' stroke-linejoin='round'/></svg><div class=t style='left:612.90px;top:392.05px;font-size:14px;color:#1d1f27;letter-spacing:0.436px;font-weight:700'>Total records</div><div class=a style='left:616.9px;top:415.8px;width:10.2px;height:10.2px;border-radius:50%;background:#1e7a4c'></div><div class=t style='left:637.60px;top:413.25px;font-size:14px;color:#1d1f27;letter-spacing:0.791px;-webkit-text-stroke:0.1px #1d1f27'>above 5,000</div><div class=a style='left:616.9px;top:434.6px;width:10.2px;height:10.2px;border-radius:50%;background:#2f9e68'></div><div class=t style='left:637.60px;top:431.75px;font-size:14px;color:#1d1f27;letter-spacing:0.882px;-webkit-text-stroke:0.1px #1d1f27'>between 1,000 - 5,000</div><div class=a style='left:616.9px;top:452.9px;width:10.2px;height:10.2px;border-radius:50%;background:#8fcaa5'></div><div class=t style='left:637.60px;top:450.45px;font-size:14px;color:#1d1f27;letter-spacing:0.763px;-webkit-text-stroke:0.1px #1d1f27'>between 100 - 1,000</div><div class=a style='left:616.9px;top:471.7px;width:10.2px;height:10.2px;border-radius:50%;background:#cbe9d5'></div><div class=t style='left:637.60px;top:469.25px;font-size:14px;color:#1d1f27;letter-spacing:0.620px;-webkit-text-stroke:0.1px #1d1f27'>below 100</div><div class=t style='left:1261.30px;top:257.11px;font-size:19px;color:#1d1f27;letter-spacing:0.980px;-webkit-text-stroke:0.35px #1d1f27'>Top Resources with Sensitive Records</div><svg class=a style='left:1792.4px;top:256.2px' width='20' height='20' viewBox='0 0 20 20'><path d='M10 1.4V18.6M1.4 10H18.6' stroke='#4a4e59' stroke-width='1.75' stroke-linecap='butt'/></svg><svg class=a style='left:1840.6px;top:256.2px' width='6' height='20' viewBox='0 0 6 20'><circle cx='3' cy='3.2' r='1.95' fill='#4a4e59'/><circle cx='3' cy='10' r='1.95' fill='#4a4e59'/><circle cx='3' cy='16.8' r='1.95' fill='#4a4e59'/></svg><div class='ic icg' style='left:1256px;top:304.2px;width:29.7px;height:29.9px'></div><svg class=a style='left:1256px;top:304.2px' width='30' height='30' viewBox='0 0 30 30'><g fill='none' stroke='#2a9860' stroke-width='1.6' stroke-linecap='round' stroke-linejoin='round'><path d='M9.2 10.4C9.2 7.6 11.6 6.1 15.3 6.1C19 6.1 21.4 7.6 21.4 10.4'/><path d='M6.9 13.6H23.2'/><path d='M8.3 13.8L9.8 22.4Q10 23.6 11.2 23.6H19.6Q20.8 23.6 21 22.4L22.4 13.8'/></g></svg><div class=t style='left:1296.80px;top:310.41px;font-size:17px;color:#1d1f27;letter-spacing:0.952px;-webkit-text-stroke:0.15px #1d1f27'>dspm-compound1</div><div class=t style='left:1827.60px;top:309.61px;font-size:17px;color:#1d1f27;letter-spacing:1.190px;-webkit-text-stroke:0.15px #1d1f27'>100</div><div class='ic icg' style='left:1256px;top:344.2px;width:29.7px;height:29.9px'></div><svg class=a style='left:1256px;top:344.2px' width='30' height='30' viewBox='0 0 30 30'><g fill='none' stroke='#2a9860' stroke-width='1.6' stroke-linecap='round' stroke-linejoin='round'><path d='M9.2 10.4C9.2 7.6 11.6 6.1 15.3 6.1C19 6.1 21.4 7.6 21.4 10.4'/><path d='M6.9 13.6H23.2'/><path d='M8.3 13.8L9.8 22.4Q10 23.6 11.2 23.6H19.6Q20.8 23.6 21 22.4L22.4 13.8'/></g></svg><div class=t style='left:1296.80px;top:350.01px;font-size:17px;color:#1d1f27;letter-spacing:1.236px;-webkit-text-stroke:0.15px #1d1f27'>dspm-compound</div><div class=t style='left:1827.60px;top:349.21px;font-size:17px;color:#1d1f27;letter-spacing:1.190px;-webkit-text-stroke:0.15px #1d1f27'>100</div><div class=t style='left:115.80px;top:529.30px;font-size:15px;color:#5d606c;letter-spacing:0.307px;-webkit-text-stroke:0.1px #5d606c'>Data Finding</div><div class=t style='left:471.70px;top:529.30px;font-size:15px;color:#5d606c;letter-spacing:0.302px;-webkit-text-stroke:0.1px #5d606c'>Severity</div><div class=t style='left:578.20px;top:529.30px;font-size:15px;color:#5d606c;letter-spacing:0.594px;-webkit-text-stroke:0.1px #5d606c'>Status</div><div class=t style='left:708.50px;top:529.30px;font-size:15px;color:#5d606c;letter-spacing:0.192px;-webkit-text-stroke:0.1px #5d606c'>Classification Rule</div><div class=t style='left:1059.80px;top:529.30px;font-size:15px;color:#5d606c;letter-spacing:0.257px;-webkit-text-stroke:0.1px #5d606c'>Records</div><div class=t style='left:1146.60px;top:529.30px;font-size:15px;color:#5d606c;letter-spacing:0.234px;-webkit-text-stroke:0.1px #5d606c'>Resource</div><div class=t style='left:1437.20px;top:529.30px;font-size:15px;color:#5d606c;letter-spacing:0.600px;-webkit-text-stroke:0.1px #5d606c'>Subscription</div><div class=t style='left:1686.30px;top:529.30px;font-size:15px;color:#5d606c;letter-spacing:0.530px;-webkit-text-stroke:0.1px #5d606c'>Project</div><div class=t style='left:1801.30px;top:529.30px;font-size:15px;color:#5d606c;letter-spacing:0.332px;-webkit-text-stroke:0.1px #5d606c'>Files</div><svg class=a style='left:1849px;top:526px' width='22' height='22' viewBox='0 0 22 22'><g fill='none' stroke='#4f525d' stroke-width='1.5' stroke-linejoin='round'><path d='M9.3 2H12.7L13.3 4.6L15 5.6L17.5 4.7L19.2 7.7L17.2 9.5V11.5L19.2 13.3L17.5 16.3L15 15.4L13.3 16.4L12.7 19H9.3L8.7 16.4L7 15.4L4.5 16.3L2.8 13.3L4.8 11.5V9.5L2.8 7.7L4.5 4.7L7 5.6L8.7 4.6Z' transform='translate(0 0.5)'/><circle cx='11' cy='11' r='2.5'/></g></svg><div class=a style='left:101px;top:557px;width:1778px;height:1px;background:#d9dae0'></div><div class='ic' style='left:111.2px;top:569.9px;width:29.7px;height:29.9px'></div><svg class=a style='left:111.2px;top:569.9px' width='30' height='30' viewBox='0 0 30 30'><g fill='none' stroke='#6a6d78' stroke-width='1.55' stroke-linejoin='round'><path d='M15.3 6.3L19.1 12.1H11.6Z'/><circle cx='10.45' cy='20.15' r='3.4'/><rect x='17.8' y='17.4' width='5.6' height='5.6' rx='1.2'/></g></svg><div class=t style='left:151.50px;top:576.71px;font-size:17px;color:#1d1f27;letter-spacing:0.692px;-webkit-text-stroke:0.15px #1d1f27'>Cybersecurity Incident Reports</div><svg class=a style='left:425.5px;top:573.9px' width='19' height='22' viewBox='0 0 19 22'><g fill='none' stroke='#4f525d' stroke-width='1.6' stroke-linecap='round' stroke-linejoin='round'><path d='M6.5 14.2C4.5 12.8 3.2 10.7 3.2 8.3C3.2 4.6 6.2 2 9.4 2C12.6 2 15.6 4.6 15.6 8.3C15.6 10.7 14.3 12.8 12.3 14.2V16H6.5Z'/><path d='M6.8 5.9C7.3 5 8 4.5 8.8 4.3'/></g><path d='M6.5 16.3H12.3V17.5C12.3 18.6 11.4 19.6 10.3 19.6H8.5C7.4 19.6 6.5 18.6 6.5 17.5Z' fill='#4f525d'/></svg><div class='tag ti' style='left:472px;top:572.8px;width:48px;height:24.5px'></div><div class=t style='left:480.90px;top:577.00px;font-size:15px;color:#575a65;letter-spacing:1.137px;-webkit-text-stroke:0.35px #575a65'>Info</div><div class='tag tu' style='left:578.2px;top:572.8px;width:99.6px;height:24.5px'></div><div class=t style='left:587.50px;top:577.00px;font-size:15px;color:#c9283b;letter-spacing:0.485px;-webkit-text-stroke:0.35px #c9283b'>Unresolved</div><div class='ic' style='left:708.3px;top:569.9px;width:29.7px;height:29.9px'></div><svg class=a style='left:708.3px;top:569.9px' width='30' height='30' viewBox='0 0 30 30'><g fill='none' stroke='#6a6d78' stroke-width='1.55' stroke-linejoin='round'><path d='M15.3 6.3L19.1 12.1H11.6Z'/><circle cx='10.45' cy='20.15' r='3.4'/><rect x='17.8' y='17.4' width='5.6' height='5.6' rx='1.2'/></g></svg><div class=t style='left:748.40px;top:576.71px;font-size:17px;color:#1d1f27;letter-spacing:0.719px;-webkit-text-stroke:0.15px #1d1f27'>Cybersecurity Incident Reports</div><div class=t style='left:1083.48px;top:576.71px;font-size:17px;color:#1d1f27;letter-spacing:0.000px;-webkit-text-stroke:0.15px #1d1f27'>482</div><div class='ic icg' style='left:1147.1px;top:569.9px;width:29.7px;height:29.9px'></div><svg class=a style='left:1147.1px;top:569.9px' width='30' height='30' viewBox='0 0 30 30'><g fill='none' stroke='#2a9860' stroke-width='1.6' stroke-linecap='round' stroke-linejoin='round'><path d='M9.2 10.4C9.2 7.6 11.6 6.1 15.3 6.1C19 6.1 21.4 7.6 21.4 10.4'/><path d='M6.9 13.6H23.2'/><path d='M8.3 13.8L9.8 22.4Q10 23.6 11.2 23.6H19.6Q20.8 23.6 21 22.4L22.4 13.8'/></g></svg><div class=t style='left:1187.90px;top:566.91px;font-size:17px;color:#1d1f27;letter-spacing:1.068px;-webkit-text-stroke:0.15px #1d1f27'>dspm-clustering</div><div class=t style='left:1186.90px;top:587.85px;font-size:14px;color:#646773;letter-spacing:1.135px;-webkit-text-stroke:0.1px #646773'>Bucket</div><svg class=a style='left:1436px;top:575.1px' width='24' height='20' viewBox='0 0 24 20'><text x='11.8' y='10.6' text-anchor='middle' font-family='Liberation Sans' font-size='12.8' fill='#3b3e48' letter-spacing='-0.3'>aws</text><path d='M1.8 13.8C7.3 17.2 16 17.2 21.6 13.4' fill='none' stroke='#f59a1b' stroke-width='1.6' stroke-linecap='round'/><path d='M19.2 12.5L22.2 13.1L21.4 16' fill='none' stroke='#f59a1b' stroke-width='1.4' stroke-linecap='round' stroke-linejoin='round'/></svg><div class=t style='left:1470.30px;top:567.11px;font-size:17px;color:#1d1f27;letter-spacing:-0.246px;-webkit-text-stroke:0.15px #1d1f27'>AWS Demo1</div><div class=t style='left:1470.30px;top:587.85px;font-size:14px;color:#646773;letter-spacing:0.695px;-webkit-text-stroke:0.1px #646773'>984186218765</div><div class=t style='left:1687.30px;top:576.71px;font-size:17px;color:#1d1f27;letter-spacing:0.611px;-webkit-text-stroke:0.15px #1d1f27'>7 projects</div><div class=t style='left:1800.58px;top:576.71px;font-size:17px;color:#1d1f27;letter-spacing:0.000px;-webkit-text-stroke:0.15px #1d1f27'>482</div><svg class=a style='left:1838.6px;top:573.4px' width='24' height='24' viewBox='0 0 24 24'><g fill='none' stroke='#4f525d' stroke-width='1.6' stroke-linejoin='round' stroke-linecap='round'><path d='M8.3 3.2H14.6L19.2 7.8V16.5C19.2 17.5 18.4 18.3 17.4 18.3H10.1C9.1 18.3 8.3 17.5 8.3 16.5V5C8.3 4 9.1 3.2 10.1 3.2Z'/><path d='M14.4 3.4V6.6C14.4 7.4 14.9 8 15.7 8H19'/><path d='M4.6 7.2V20C4.6 21.1 5.4 21.9 6.5 21.9H15.2'/></g></svg><div class='ic icr' style='left:111.2px;top:624.9px;width:29.7px;height:29.9px'></div><svg class=a style='left:111.2px;top:624.9px' width='30' height='30' viewBox='0 0 30 30'><g fill='none' stroke='#d8343f' stroke-width='1.6' stroke-linejoin='round' stroke-linecap='round'><rect x='6.6' y='9.8' width='17.9' height='13' rx='2.3'/><path d='M12.2 9.7V7.4C12.2 6.5 12.7 5.9 13.6 5.9H17.5C18.4 5.9 18.9 6.5 18.9 7.4V9.7'/><path d='M15.4 13V19.4M12.2 16.2H18.6' stroke-width='2.1'/></g></svg><div class=t style='left:150.50px;top:631.71px;font-size:17px;color:#1d1f27;letter-spacing:0.812px;-webkit-text-stroke:0.15px #1d1f27'>PHI/Patient ID</div><div class='tag tm' style='left:472px;top:627.8px;width:76px;height:24.5px'></div><div class=t style='left:481.40px;top:632.00px;font-size:15px;color:#6b5a16;letter-spacing:0.567px;-webkit-text-stroke:0.35px #6b5a16'>Medium</div><div class='tag tu' style='left:578.2px;top:627.8px;width:99.6px;height:24.5px'></div><div class=t style='left:587.50px;top:632.00px;font-size:15px;color:#c9283b;letter-spacing:0.485px;-webkit-text-stroke:0.35px #c9283b'>Unresolved</div><div class='ic icr' style='left:708.3px;top:624.9px;width:29.7px;height:29.9px'></div><svg class=a style='left:708.3px;top:624.9px' width='30' height='30' viewBox='0 0 30 30'><g fill='none' stroke='#d8343f' stroke-width='1.6' stroke-linejoin='round' stroke-linecap='round'><rect x='6.6' y='9.8' width='17.9' height='13' rx='2.3'/><path d='M12.2 9.7V7.4C12.2 6.5 12.7 5.9 13.6 5.9H17.5C18.4 5.9 18.9 6.5 18.9 7.4V9.7'/><path d='M15.4 13V19.4M12.2 16.2H18.6' stroke-width='2.1'/></g></svg><div class=t style='left:747.40px;top:631.71px;font-size:17px;color:#1d1f27;letter-spacing:0.669px;-webkit-text-stroke:0.15px #1d1f27'>Patient ID</div><div class=t style='left:1083.48px;top:631.71px;font-size:17px;color:#1d1f27;letter-spacing:0.000px;-webkit-text-stroke:0.15px #1d1f27'>174</div><div class='ic icg' style='left:1147.1px;top:624.9px;width:29.7px;height:29.9px'></div><svg class=a style='left:1147.1px;top:624.9px' width='30' height='30' viewBox='0 0 30 30'><g fill='none' stroke='#2a9860' stroke-width='1.6' stroke-linecap='round' stroke-linejoin='round'><path d='M9.2 10.4C9.2 7.6 11.6 6.1 15.3 6.1C19 6.1 21.4 7.6 21.4 10.4'/><path d='M6.9 13.6H23.2'/><path d='M8.3 13.8L9.8 22.4Q10 23.6 11.2 23.6H19.6Q20.8 23.6 21 22.4L22.4 13.8'/></g></svg><div class=t style='left:1187.90px;top:621.91px;font-size:17px;color:#1d1f27;letter-spacing:0.914px;-webkit-text-stroke:0.15px #1d1f27'>dspm-compound1</div><div class=t style='left:1186.90px;top:642.85px;font-size:14px;color:#646773;letter-spacing:1.135px;-webkit-text-stroke:0.1px #646773'>Bucket</div><svg class=a style='left:1436px;top:630.1px' width='24' height='20' viewBox='0 0 24 20'><text x='11.8' y='10.6' text-anchor='middle' font-family='Liberation Sans' font-size='12.8' fill='#3b3e48' letter-spacing='-0.3'>aws</text><path d='M1.8 13.8C7.3 17.2 16 17.2 21.6 13.4' fill='none' stroke='#f59a1b' stroke-width='1.6' stroke-linecap='round'/><path d='M19.2 12.5L22.2 13.1L21.4 16' fill='none' stroke='#f59a1b' stroke-width='1.4' stroke-linecap='round' stroke-linejoin='round'/></svg><div class=t style='left:1470.30px;top:622.11px;font-size:17px;color:#1d1f27;letter-spacing:-0.246px;-webkit-text-stroke:0.15px #1d1f27'>AWS Demo1</div><div class=t style='left:1470.30px;top:642.85px;font-size:14px;color:#646773;letter-spacing:0.695px;-webkit-text-stroke:0.1px #646773'>984186218765</div><div class=t style='left:1687.30px;top:631.71px;font-size:17px;color:#1d1f27;letter-spacing:0.611px;-webkit-text-stroke:0.15px #1d1f27'>7 projects</div><div class=t style='left:1819.49px;top:631.71px;font-size:17px;color:#1d1f27;letter-spacing:0.000px;-webkit-text-stroke:0.15px #1d1f27'>3</div><svg class=a style='left:1838.6px;top:628.4px' width='24' height='24' viewBox='0 0 24 24'><g fill='none' stroke='#4f525d' stroke-width='1.6' stroke-linejoin='round' stroke-linecap='round'><path d='M8.3 3.2H14.6L19.2 7.8V16.5C19.2 17.5 18.4 18.3 17.4 18.3H10.1C9.1 18.3 8.3 17.5 8.3 16.5V5C8.3 4 9.1 3.2 10.1 3.2Z'/><path d='M14.4 3.4V6.6C14.4 7.4 14.9 8 15.7 8H19'/><path d='M4.6 7.2V20C4.6 21.1 5.4 21.9 6.5 21.9H15.2'/></g></svg><div class='ic icr' style='left:111.2px;top:679.9px;width:29.7px;height:29.9px'></div><svg class=a style='left:111.2px;top:679.9px' width='30' height='30' viewBox='0 0 30 30'><g fill='none' stroke='#d8343f' stroke-width='1.6' stroke-linejoin='round' stroke-linecap='round'><rect x='6.6' y='9.8' width='17.9' height='13' rx='2.3'/><path d='M12.2 9.7V7.4C12.2 6.5 12.7 5.9 13.6 5.9H17.5C18.4 5.9 18.9 6.5 18.9 7.4V9.7'/><path d='M15.4 13V19.4M12.2 16.2H18.6' stroke-width='2.1'/></g></svg><div class=t style='left:150.50px;top:686.71px;font-size:17px;color:#1d1f27;letter-spacing:0.812px;-webkit-text-stroke:0.15px #1d1f27'>PHI/Patient ID</div><div class='tag tm' style='left:472px;top:682.8px;width:76px;height:24.5px'></div><div class=t style='left:481.40px;top:687.00px;font-size:15px;color:#6b5a16;letter-spacing:0.567px;-webkit-text-stroke:0.35px #6b5a16'>Medium</div><div class='tag tu' style='left:578.2px;top:682.8px;width:99.6px;height:24.5px'></div><div class=t style='left:587.50px;top:687.00px;font-size:15px;color:#c9283b;letter-spacing:0.485px;-webkit-text-stroke:0.35px #c9283b'>Unresolved</div><div class='ic icr' style='left:708.3px;top:679.9px;width:29.7px;height:29.9px'></div><svg class=a style='left:708.3px;top:679.9px' width='30' height='30' viewBox='0 0 30 30'><g fill='none' stroke='#d8343f' stroke-width='1.6' stroke-linejoin='round' stroke-linecap='round'><rect x='6.6' y='9.8' width='17.9' height='13' rx='2.3'/><path d='M12.2 9.7V7.4C12.2 6.5 12.7 5.9 13.6 5.9H17.5C18.4 5.9 18.9 6.5 18.9 7.4V9.7'/><path d='M15.4 13V19.4M12.2 16.2H18.6' stroke-width='2.1'/></g></svg><div class=t style='left:747.40px;top:686.71px;font-size:17px;color:#1d1f27;letter-spacing:0.669px;-webkit-text-stroke:0.15px #1d1f27'>Patient ID</div><div class=t style='left:1083.48px;top:686.71px;font-size:17px;color:#1d1f27;letter-spacing:0.000px;-webkit-text-stroke:0.15px #1d1f27'>174</div><div class='ic icg' style='left:1147.1px;top:679.9px;width:29.7px;height:29.9px'></div><svg class=a style='left:1147.1px;top:679.9px' width='30' height='30' viewBox='0 0 30 30'><g fill='none' stroke='#2a9860' stroke-width='1.6' stroke-linecap='round' stroke-linejoin='round'><path d='M9.2 10.4C9.2 7.6 11.6 6.1 15.3 6.1C19 6.1 21.4 7.6 21.4 10.4'/><path d='M6.9 13.6H23.2'/><path d='M8.3 13.8L9.8 22.4Q10 23.6 11.2 23.6H19.6Q20.8 23.6 21 22.4L22.4 13.8'/></g></svg><div class=t style='left:1187.90px;top:676.91px;font-size:17px;color:#1d1f27;letter-spacing:1.194px;-webkit-text-stroke:0.15px #1d1f27'>dspm-compound</div><div class=t style='left:1186.90px;top:697.85px;font-size:14px;color:#646773;letter-spacing:1.135px;-webkit-text-stroke:0.1px #646773'>Bucket</div><svg class=a style='left:1436px;top:685.1px' width='24' height='20' viewBox='0 0 24 20'><text x='11.8' y='10.6' text-anchor='middle' font-family='Liberation Sans' font-size='12.8' fill='#3b3e48' letter-spacing='-0.3'>aws</text><path d='M1.8 13.8C7.3 17.2 16 17.2 21.6 13.4' fill='none' stroke='#f59a1b' stroke-width='1.6' stroke-linecap='round'/><path d='M19.2 12.5L22.2 13.1L21.4 16' fill='none' stroke='#f59a1b' stroke-width='1.4' stroke-linecap='round' stroke-linejoin='round'/></svg><div class=t style='left:1470.30px;top:677.11px;font-size:17px;color:#1d1f27;letter-spacing:-0.246px;-webkit-text-stroke:0.15px #1d1f27'>AWS Demo1</div><div class=t style='left:1470.30px;top:697.85px;font-size:14px;color:#646773;letter-spacing:0.695px;-webkit-text-stroke:0.1px #646773'>984186218765</div><div class=t style='left:1687.30px;top:686.71px;font-size:17px;color:#1d1f27;letter-spacing:0.611px;-webkit-text-stroke:0.15px #1d1f27'>7 projects</div><div class=t style='left:1819.49px;top:686.71px;font-size:17px;color:#1d1f27;letter-spacing:0.000px;-webkit-text-stroke:0.15px #1d1f27'>3</div><svg class=a style='left:1838.6px;top:683.4px' width='24' height='24' viewBox='0 0 24 24'><g fill='none' stroke='#4f525d' stroke-width='1.6' stroke-linejoin='round' stroke-linecap='round'><path d='M8.3 3.2H14.6L19.2 7.8V16.5C19.2 17.5 18.4 18.3 17.4 18.3H10.1C9.1 18.3 8.3 17.5 8.3 16.5V5C8.3 4 9.1 3.2 10.1 3.2Z'/><path d='M14.4 3.4V6.6C14.4 7.4 14.9 8 15.7 8H19'/><path d='M4.6 7.2V20C4.6 21.1 5.4 21.9 6.5 21.9H15.2'/></g></svg><div class='ic' style='left:111.2px;top:734.9px;width:29.7px;height:29.9px'></div><svg class=a style='left:111.2px;top:734.9px' width='30' height='30' viewBox='0 0 30 30'><g fill='none' stroke='#6a6d78' stroke-width='1.55' stroke-linejoin='round'><path d='M15.3 6.3L19.1 12.1H11.6Z'/><circle cx='10.45' cy='20.15' r='3.4'/><rect x='17.8' y='17.4' width='5.6' height='5.6' rx='1.2'/></g></svg><div class=t style='left:151.50px;top:741.71px;font-size:17px;color:#1d1f27;letter-spacing:0.441px;-webkit-text-stroke:0.15px #1d1f27'>Customer Feedback Data</div><svg class=a style='left:425.5px;top:738.9px' width='19' height='22' viewBox='0 0 19 22'><g fill='none' stroke='#4f525d' stroke-width='1.6' stroke-linecap='round' stroke-linejoin='round'><path d='M6.5 14.2C4.5 12.8 3.2 10.7 3.2 8.3C3.2 4.6 6.2 2 9.4 2C12.6 2 15.6 4.6 15.6 8.3C15.6 10.7 14.3 12.8 12.3 14.2V16H6.5Z'/><path d='M6.8 5.9C7.3 5 8 4.5 8.8 4.3'/></g><path d='M6.5 16.3H12.3V17.5C12.3 18.6 11.4 19.6 10.3 19.6H8.5C7.4 19.6 6.5 18.6 6.5 17.5Z' fill='#4f525d'/></svg><div class='tag ti' style='left:472px;top:737.8px;width:48px;height:24.5px'></div><div class=t style='left:480.90px;top:742.00px;font-size:15px;color:#575a65;letter-spacing:1.137px;-webkit-text-stroke:0.35px #575a65'>Info</div><div class='tag tu' style='left:578.2px;top:737.8px;width:99.6px;height:24.5px'></div><div class=t style='left:587.50px;top:742.00px;font-size:15px;color:#c9283b;letter-spacing:0.485px;-webkit-text-stroke:0.35px #c9283b'>Unresolved</div><div class='ic' style='left:708.3px;top:734.9px;width:29.7px;height:29.9px'></div><svg class=a style='left:708.3px;top:734.9px' width='30' height='30' viewBox='0 0 30 30'><g fill='none' stroke='#6a6d78' stroke-width='1.55' stroke-linejoin='round'><path d='M15.3 6.3L19.1 12.1H11.6Z'/><circle cx='10.45' cy='20.15' r='3.4'/><rect x='17.8' y='17.4' width='5.6' height='5.6' rx='1.2'/></g></svg><div class=t style='left:748.40px;top:741.71px;font-size:17px;color:#1d1f27;letter-spacing:0.526px;-webkit-text-stroke:0.15px #1d1f27'>Customer Feedback</div><div class=t style='left:1083.48px;top:741.71px;font-size:17px;color:#1d1f27;letter-spacing:0.000px;-webkit-text-stroke:0.15px #1d1f27'>138</div><div class='ic icg' style='left:1147.1px;top:734.9px;width:29.7px;height:29.9px'></div><svg class=a style='left:1147.1px;top:734.9px' width='30' height='30' viewBox='0 0 30 30'><g fill='none' stroke='#2a9860' stroke-width='1.6' stroke-linecap='round' stroke-linejoin='round'><path d='M9.2 10.4C9.2 7.6 11.6 6.1 15.3 6.1C19 6.1 21.4 7.6 21.4 10.4'/><path d='M6.9 13.6H23.2'/><path d='M8.3 13.8L9.8 22.4Q10 23.6 11.2 23.6H19.6Q20.8 23.6 21 22.4L22.4 13.8'/></g></svg><div class=t style='left:1187.90px;top:731.91px;font-size:17px;color:#1d1f27;letter-spacing:0.933px;-webkit-text-stroke:0.15px #1d1f27'>dspm-clustering1</div><div class=t style='left:1186.90px;top:752.85px;font-size:14px;color:#646773;letter-spacing:1.135px;-webkit-text-stroke:0.1px #646773'>Bucket</div><svg class=a style='left:1436px;top:740.1px' width='24' height='20' viewBox='0 0 24 20'><text x='11.8' y='10.6' text-anchor='middle' font-family='Liberation Sans' font-size='12.8' fill='#3b3e48' letter-spacing='-0.3'>aws</text><path d='M1.8 13.8C7.3 17.2 16 17.2 21.6 13.4' fill='none' stroke='#f59a1b' stroke-width='1.6' stroke-linecap='round'/><path d='M19.2 12.5L22.2 13.1L21.4 16' fill='none' stroke='#f59a1b' stroke-width='1.4' stroke-linecap='round' stroke-linejoin='round'/></svg><div class=t style='left:1470.30px;top:732.11px;font-size:17px;color:#1d1f27;letter-spacing:-0.246px;-webkit-text-stroke:0.15px #1d1f27'>AWS Demo1</div><div class=t style='left:1470.30px;top:752.85px;font-size:14px;color:#646773;letter-spacing:0.695px;-webkit-text-stroke:0.1px #646773'>984186218765</div><div class=t style='left:1687.30px;top:741.71px;font-size:17px;color:#1d1f27;letter-spacing:0.611px;-webkit-text-stroke:0.15px #1d1f27'>7 projects</div><div class=t style='left:1800.58px;top:741.71px;font-size:17px;color:#1d1f27;letter-spacing:0.000px;-webkit-text-stroke:0.15px #1d1f27'>138</div><svg class=a style='left:1838.6px;top:738.4px' width='24' height='24' viewBox='0 0 24 24'><g fill='none' stroke='#4f525d' stroke-width='1.6' stroke-linejoin='round' stroke-linecap='round'><path d='M8.3 3.2H14.6L19.2 7.8V16.5C19.2 17.5 18.4 18.3 17.4 18.3H10.1C9.1 18.3 8.3 17.5 8.3 16.5V5C8.3 4 9.1 3.2 10.1 3.2Z'/><path d='M14.4 3.4V6.6C14.4 7.4 14.9 8 15.7 8H19'/><path d='M4.6 7.2V20C4.6 21.1 5.4 21.9 6.5 21.9H15.2'/></g></svg><div class='ic' style='left:111.2px;top:789.9px;width:29.7px;height:29.9px'></div><svg class=a style='left:111.2px;top:789.9px' width='30' height='30' viewBox='0 0 30 30'><g fill='none' stroke='#6a6d78' stroke-width='1.55' stroke-linejoin='round'><path d='M15.3 6.3L19.1 12.1H11.6Z'/><circle cx='10.45' cy='20.15' r='3.4'/><rect x='17.8' y='17.4' width='5.6' height='5.6' rx='1.2'/></g></svg><div class=t style='left:150.50px;top:796.71px;font-size:17px;color:#1d1f27;letter-spacing:0.737px;-webkit-text-stroke:0.15px #1d1f27'>R&amp;D Documentation</div><svg class=a style='left:425.5px;top:793.9px' width='19' height='22' viewBox='0 0 19 22'><g fill='none' stroke='#4f525d' stroke-width='1.6' stroke-linecap='round' stroke-linejoin='round'><path d='M6.5 14.2C4.5 12.8 3.2 10.7 3.2 8.3C3.2 4.6 6.2 2 9.4 2C12.6 2 15.6 4.6 15.6 8.3C15.6 10.7 14.3 12.8 12.3 14.2V16H6.5Z'/><path d='M6.8 5.9C7.3 5 8 4.5 8.8 4.3'/></g><path d='M6.5 16.3H12.3V17.5C12.3 18.6 11.4 19.6 10.3 19.6H8.5C7.4 19.6 6.5 18.6 6.5 17.5Z' fill='#4f525d'/></svg><div class='tag ti' style='left:472px;top:792.8px;width:48px;height:24.5px'></div><div class=t style='left:480.90px;top:797.00px;font-size:15px;color:#575a65;letter-spacing:1.137px;-webkit-text-stroke:0.35px #575a65'>Info</div><div class='tag tu' style='left:578.2px;top:792.8px;width:99.6px;height:24.5px'></div><div class=t style='left:587.50px;top:797.00px;font-size:15px;color:#c9283b;letter-spacing:0.485px;-webkit-text-stroke:0.35px #c9283b'>Unresolved</div><div class='ic' style='left:708.3px;top:789.9px;width:29.7px;height:29.9px'></div><svg class=a style='left:708.3px;top:789.9px' width='30' height='30' viewBox='0 0 30 30'><g fill='none' stroke='#6a6d78' stroke-width='1.55' stroke-linejoin='round'><path d='M15.3 6.3L19.1 12.1H11.6Z'/><circle cx='10.45' cy='20.15' r='3.4'/><rect x='17.8' y='17.4' width='5.6' height='5.6' rx='1.2'/></g></svg><div class=t style='left:747.40px;top:796.71px;font-size:17px;color:#1d1f27;letter-spacing:0.737px;-webkit-text-stroke:0.15px #1d1f27'>R&amp;D Documentation</div><div class=t style='left:1083.48px;top:796.71px;font-size:17px;color:#1d1f27;letter-spacing:0.000px;-webkit-text-stroke:0.15px #1d1f27'>129</div><div class='ic icg' style='left:1147.1px;top:789.9px;width:29.7px;height:29.9px'></div><svg class=a style='left:1147.1px;top:789.9px' width='30' height='30' viewBox='0 0 30 30'><g fill='none' stroke='#2a9860' stroke-width='1.6' stroke-linecap='round' stroke-linejoin='round'><path d='M9.2 10.4C9.2 7.6 11.6 6.1 15.3 6.1C19 6.1 21.4 7.6 21.4 10.4'/><path d='M6.9 13.6H23.2'/><path d='M8.3 13.8L9.8 22.4Q10 23.6 11.2 23.6H19.6Q20.8 23.6 21 22.4L22.4 13.8'/></g></svg><div class=t style='left:1187.90px;top:786.91px;font-size:17px;color:#1d1f27;letter-spacing:1.100px;-webkit-text-stroke:0.15px #1d1f27'>dspm-clustering2</div><div class=t style='left:1186.90px;top:807.85px;font-size:14px;color:#646773;letter-spacing:1.135px;-webkit-text-stroke:0.1px #646773'>Bucket</div><svg class=a style='left:1436px;top:795.1px' width='24' height='20' viewBox='0 0 24 20'><text x='11.8' y='10.6' text-anchor='middle' font-family='Liberation Sans' font-size='12.8' fill='#3b3e48' letter-spacing='-0.3'>aws</text><path d='M1.8 13.8C7.3 17.2 16 17.2 21.6 13.4' fill='none' stroke='#f59a1b' stroke-width='1.6' stroke-linecap='round'/><path d='M19.2 12.5L22.2 13.1L21.4 16' fill='none' stroke='#f59a1b' stroke-width='1.4' stroke-linecap='round' stroke-linejoin='round'/></svg><div class=t style='left:1470.30px;top:787.11px;font-size:17px;color:#1d1f27;letter-spacing:-0.246px;-webkit-text-stroke:0.15px #1d1f27'>AWS Demo1</div><div class=t style='left:1470.30px;top:807.85px;font-size:14px;color:#646773;letter-spacing:0.695px;-webkit-text-stroke:0.1px #646773'>984186218765</div><div class=t style='left:1687.30px;top:796.71px;font-size:17px;color:#1d1f27;letter-spacing:0.611px;-webkit-text-stroke:0.15px #1d1f27'>7 projects</div><div class=t style='left:1800.58px;top:796.71px;font-size:17px;color:#1d1f27;letter-spacing:0.000px;-webkit-text-stroke:0.15px #1d1f27'>129</div><svg class=a style='left:1838.6px;top:793.4px' width='24' height='24' viewBox='0 0 24 24'><g fill='none' stroke='#4f525d' stroke-width='1.6' stroke-linejoin='round' stroke-linecap='round'><path d='M8.3 3.2H14.6L19.2 7.8V16.5C19.2 17.5 18.4 18.3 17.4 18.3H10.1C9.1 18.3 8.3 17.5 8.3 16.5V5C8.3 4 9.1 3.2 10.1 3.2Z'/><path d='M14.4 3.4V6.6C14.4 7.4 14.9 8 15.7 8H19'/><path d='M4.6 7.2V20C4.6 21.1 5.4 21.9 6.5 21.9H15.2'/></g></svg><div class='ic' style='left:111.2px;top:844.9px;width:29.7px;height:29.9px'></div><svg class=a style='left:111.2px;top:844.9px' width='30' height='30' viewBox='0 0 30 30'><g fill='none' stroke='#6a6d78' stroke-width='1.55' stroke-linejoin='round'><path d='M15.3 6.3L19.1 12.1H11.6Z'/><circle cx='10.45' cy='20.15' r='3.4'/><rect x='17.8' y='17.4' width='5.6' height='5.6' rx='1.2'/></g></svg><div class=t style='left:151.50px;top:841.51px;font-size:17px;color:#1d1f27;letter-spacing:0.783px;-webkit-text-stroke:0.15px #1d1f27'>Tenant Reports/Tenant</div><svg class=a style='left:425.5px;top:848.9px' width='19' height='22' viewBox='0 0 19 22'><g fill='none' stroke='#4f525d' stroke-width='1.6' stroke-linecap='round' stroke-linejoin='round'><path d='M6.5 14.2C4.5 12.8 3.2 10.7 3.2 8.3C3.2 4.6 6.2 2 9.4 2C12.6 2 15.6 4.6 15.6 8.3C15.6 10.7 14.3 12.8 12.3 14.2V16H6.5Z'/><path d='M6.8 5.9C7.3 5 8 4.5 8.8 4.3'/></g><path d='M6.5 16.3H12.3V17.5C12.3 18.6 11.4 19.6 10.3 19.6H8.5C7.4 19.6 6.5 18.6 6.5 17.5Z' fill='#4f525d'/></svg><div class='tag ti' style='left:472px;top:847.8px;width:48px;height:24.5px'></div><div class=t style='left:480.90px;top:852.00px;font-size:15px;color:#575a65;letter-spacing:1.137px;-webkit-text-stroke:0.35px #575a65'>Info</div><div class='tag tu' style='left:578.2px;top:847.8px;width:99.6px;height:24.5px'></div><div class=t style='left:587.50px;top:852.00px;font-size:15px;color:#c9283b;letter-spacing:0.485px;-webkit-text-stroke:0.35px #c9283b'>Unresolved</div><div class='ic' style='left:708.3px;top:844.9px;width:29.7px;height:29.9px'></div><svg class=a style='left:708.3px;top:844.9px' width='30' height='30' viewBox='0 0 30 30'><g fill='none' stroke='#6a6d78' stroke-width='1.55' stroke-linejoin='round'><path d='M15.3 6.3L19.1 12.1H11.6Z'/><circle cx='10.45' cy='20.15' r='3.4'/><rect x='17.8' y='17.4' width='5.6' height='5.6' rx='1.2'/></g></svg><div class=t style='left:748.40px;top:851.71px;font-size:17px;color:#1d1f27;letter-spacing:0.554px;-webkit-text-stroke:0.15px #1d1f27'>Tenant Reports</div><div class=t style='left:1083.48px;top:851.71px;font-size:17px;color:#1d1f27;letter-spacing:0.000px;-webkit-text-stroke:0.15px #1d1f27'>127</div><div class='ic icg' style='left:1147.1px;top:844.9px;width:29.7px;height:29.9px'></div><svg class=a style='left:1147.1px;top:844.9px' width='30' height='30' viewBox='0 0 30 30'><g fill='none' stroke='#2a9860' stroke-width='1.6' stroke-linecap='round' stroke-linejoin='round'><path d='M9.2 10.4C9.2 7.6 11.6 6.1 15.3 6.1C19 6.1 21.4 7.6 21.4 10.4'/><path d='M6.9 13.6H23.2'/><path d='M8.3 13.8L9.8 22.4Q10 23.6 11.2 23.6H19.6Q20.8 23.6 21 22.4L22.4 13.8'/></g></svg><div class=t style='left:1187.90px;top:841.91px;font-size:17px;color:#1d1f27;letter-spacing:1.100px;-webkit-text-stroke:0.15px #1d1f27'>dspm-clustering2</div><svg class=a style='left:1436px;top:850.1px' width='24' height='20' viewBox='0 0 24 20'><text x='11.8' y='10.6' text-anchor='middle' font-family='Liberation Sans' font-size='12.8' fill='#3b3e48' letter-spacing='-0.3'>aws</text><path d='M1.8 13.8C7.3 17.2 16 17.2 21.6 13.4' fill='none' stroke='#f59a1b' stroke-width='1.6' stroke-linecap='round'/><path d='M19.2 12.5L22.2 13.1L21.4 16' fill='none' stroke='#f59a1b' stroke-width='1.4' stroke-linecap='round' stroke-linejoin='round'/></svg><div class=t style='left:1470.30px;top:842.11px;font-size:17px;color:#1d1f27;letter-spacing:-0.246px;-webkit-text-stroke:0.15px #1d1f27'>AWS Demo1</div><div class=t style='left:1687.30px;top:851.71px;font-size:17px;color:#1d1f27;letter-spacing:0.611px;-webkit-text-stroke:0.15px #1d1f27'>7 projects</div><div class=t style='left:1800.58px;top:851.71px;font-size:17px;color:#1d1f27;letter-spacing:0.000px;-webkit-text-stroke:0.15px #1d1f27'>127</div><svg class=a style='left:1838.6px;top:848.4px' width='24' height='24' viewBox='0 0 24 24'><g fill='none' stroke='#4f525d' stroke-width='1.6' stroke-linejoin='round' stroke-linecap='round'><path d='M8.3 3.2H14.6L19.2 7.8V16.5C19.2 17.5 18.4 18.3 17.4 18.3H10.1C9.1 18.3 8.3 17.5 8.3 16.5V5C8.3 4 9.1 3.2 10.1 3.2Z'/><path d='M14.4 3.4V6.6C14.4 7.4 14.9 8 15.7 8H19'/><path d='M4.6 7.2V20C4.6 21.1 5.4 21.9 6.5 21.9H15.2'/></g></svg>
</body></html>
